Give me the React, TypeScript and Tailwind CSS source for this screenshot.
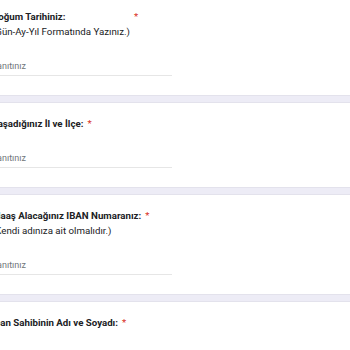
import React from "react";

type Question = {
  lines: string[];
};

const questions: Question[] = [
  { lines: ["Doğum Tarihiniz:", "(Gün-Ay-Yıl Formatında Yazınız.)"] },
  { lines: ["Yaşadığınız İl ve İlçe:"] },
  { lines: ["Maaş Alacağınız IBAN Numaranız:", "(Kendi adınıza ait olmalıdır.)"] },
  { lines: ["Iban Sahibinin Adı ve Soyadı:"] },
];

function QuestionCard({ q }: { q: Question }) {
  return (
    <div className="bg-white rounded-lg shadow-[0_0_0_1px_#e3e2ec] pl-[16px] pr-4 pt-[13px] pb-[19px]">
      <div className="flex items-start text-[9.7px] leading-[15px] text-[#202124]">
        <div>
          {q.lines.map((l, i) => (
            <div key={i} className={i === 0 ? "font-bold" : "font-normal"}>
              {l}
            </div>
          ))}
        </div>
        <span className="ml-[4px] text-[#d93025] font-normal">*</span>
      </div>
      <div className="mt-[20px] w-[180px] border-b border-[#e6e6e6] pb-[2px]">
        <div className="text-[9px] leading-[14px] text-[#70757a]">Yanıtınız</div>
      </div>
    </div>
  );
}

export default function App() {
  return (
    <div
      className="w-[350px] h-[350px] overflow-hidden bg-[#edecf6]"
      style={{ fontFamily: "Roboto, 'Liberation Sans', sans-serif" }}
    >
      <div className="ml-[-24px] w-[420px] mt-[-4px] flex flex-col gap-[8px]">
        {questions.map((q, i) => (
          <QuestionCard key={i} q={q} />
        ))}
      </div>
    </div>
  );
}
